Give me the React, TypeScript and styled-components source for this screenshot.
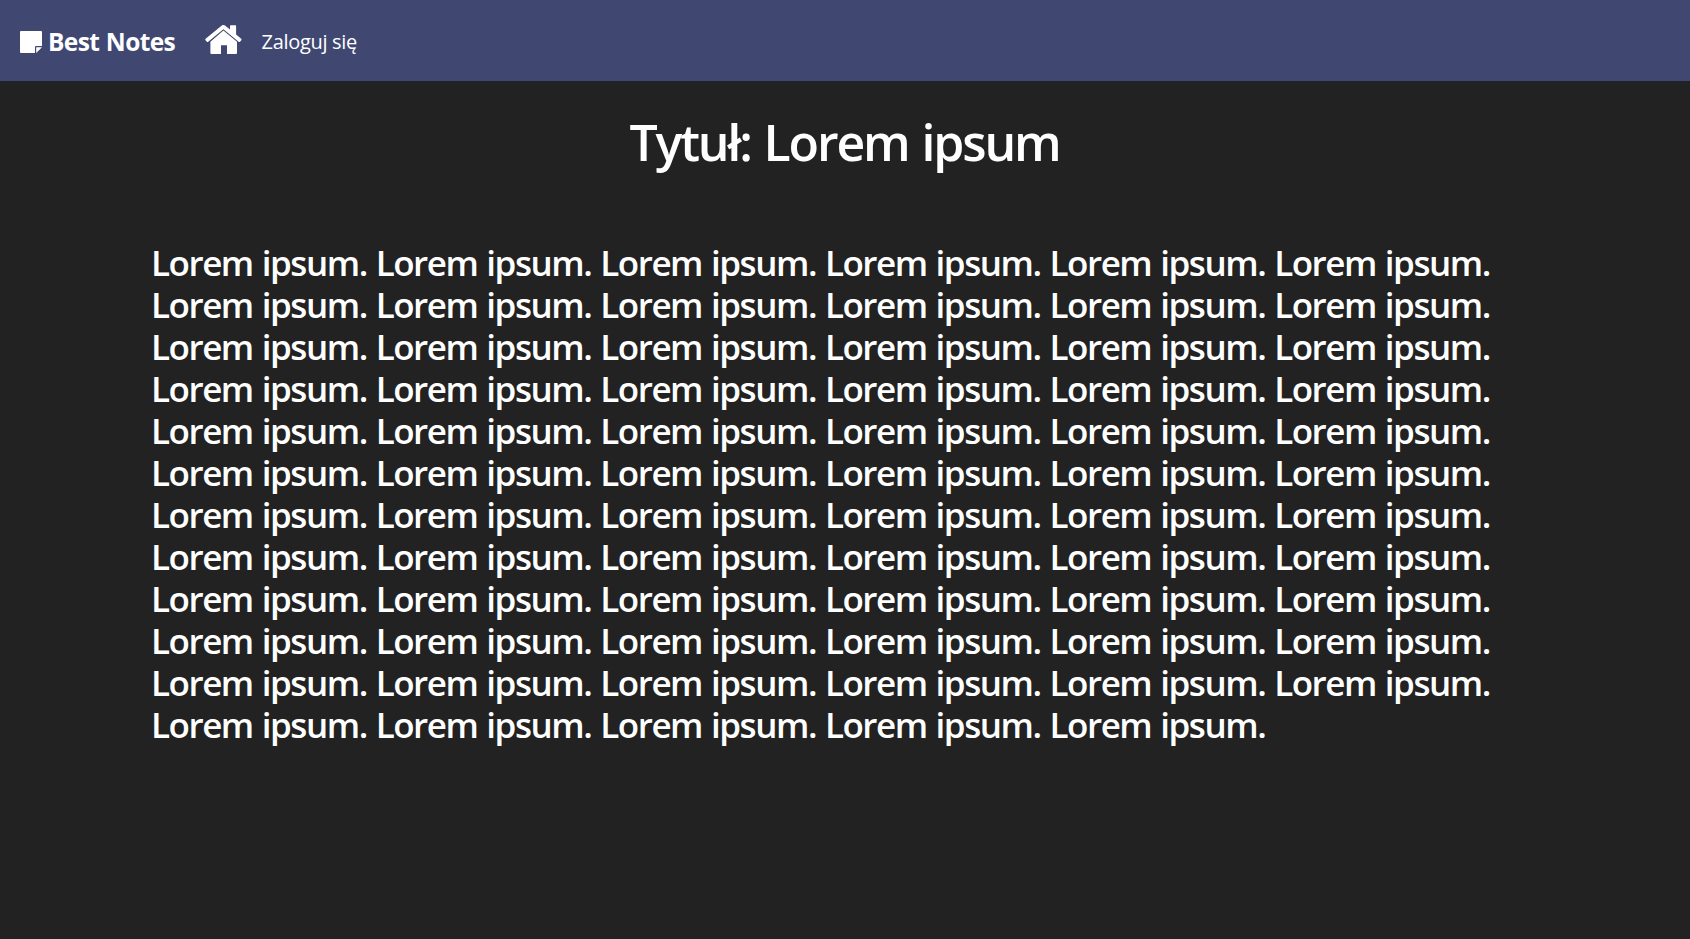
import React from "react";
import styled, { createGlobalStyle } from "styled-components";

const GlobalStyle = createGlobalStyle`
  * { box-sizing: border-box; }
  body {
    margin: 0;
    background: #222222;
    color: #ffffff;
    font-family: "Segoe UI", "Open Sans", "Noto Sans", sans-serif;
  }
`;

const Page = styled.div`
  min-height: 939px;
  background: #222222;
`;

const Navbar = styled.nav`
  display: flex;
  align-items: center;
  height: 81px;
  padding: 0 20px;
  background: #404872;
`;

const Brand = styled.a`
  display: flex;
  align-items: center;
  height: 34px;
  margin-top: 3px;
  color: #ffffff;
  font-size: 24.5px;
  font-weight: 700;
  line-height: 34px;
  letter-spacing: -0.65px;
  word-spacing: 1px;
  white-space: nowrap;
`;

const BrandName = styled.span`
  width: 133.5px;
  margin-left: 6px;
`;

const HomeLink = styled.a`
  display: flex;
  margin: 0 19.5px 2px 23.5px;
`;

const NavLink = styled.a`
  margin-top: 3px;
  color: #ffffff;
  font-size: 20px;
  line-height: 30px;
  letter-spacing: -0.3px;
  white-space: nowrap;
`;

const Article = styled.main`
  padding: 31px 150px 0 151px;
`;

const Title = styled.h1`
  margin: 0;
  padding-right: 2px;
  font-size: 50px;
  font-weight: 600;
  font-kerning: none;
  line-height: 60px;
  letter-spacing: -2.15px;
  word-spacing: 2px;
  text-align: center;
  white-space: nowrap;
`;

const Content = styled.h3`
  margin: 70px 0 0;
  font-size: 35px;
  font-weight: 600;
  line-height: 42px;
  letter-spacing: -1.45px;
  word-spacing: 1.22px;
`;

const NoteIcon = () => (
  <svg width="22" height="22" viewBox="0 0 22 22" fill="#ffffff">
    <path d="M1 0H21Q22 0 22 1V15H16Q15 15 15 16V22H1Q0 22 0 21V1Q0 0 1 0Z" />
    <path d="M16.2 16.2H22L16.2 22Z" />
  </svg>
);

const HomeIcon = () => (
  <svg width="37" height="30" viewBox="0 0 37 30" fill="#ffffff">
    <path d="M16.5 .7Q18.4 -.8 20.3 .7L25 4.6V1Q25 .3 25.7 .3H30.4Q31.1 .3 31.1 1V9.5L36.2 13.8Q36.9 14.5 36.3 15.2L35 16.8Q34.3 17.4 33.6 16.8L18.4 4.3L3.2 16.8Q2.5 17.4 1.9 16.8L.5 15.2Q0 14.5 .6 13.8Z" />
    <path d="M18.4 5.6L32 16.8V28Q32 29 31 29H22V20.2H16V29H6.4Q5.4 29 5.4 28V16.8Z" />
  </svg>
);

const note = Array(71).fill("Lorem ipsum.").join(" ");

export default function App() {
  return (
    <Page>
      <GlobalStyle />
      <Navbar>
        <Brand>
          <NoteIcon />
          <BrandName>Best Notes</BrandName>
        </Brand>
        <HomeLink aria-label="Home">
          <HomeIcon />
        </HomeLink>
        <NavLink>Zaloguj się</NavLink>
      </Navbar>
      <Article>
        <Title>Tytuł: Lorem ipsum</Title>
        <Content>{note}</Content>
      </Article>
    </Page>
  );
}
